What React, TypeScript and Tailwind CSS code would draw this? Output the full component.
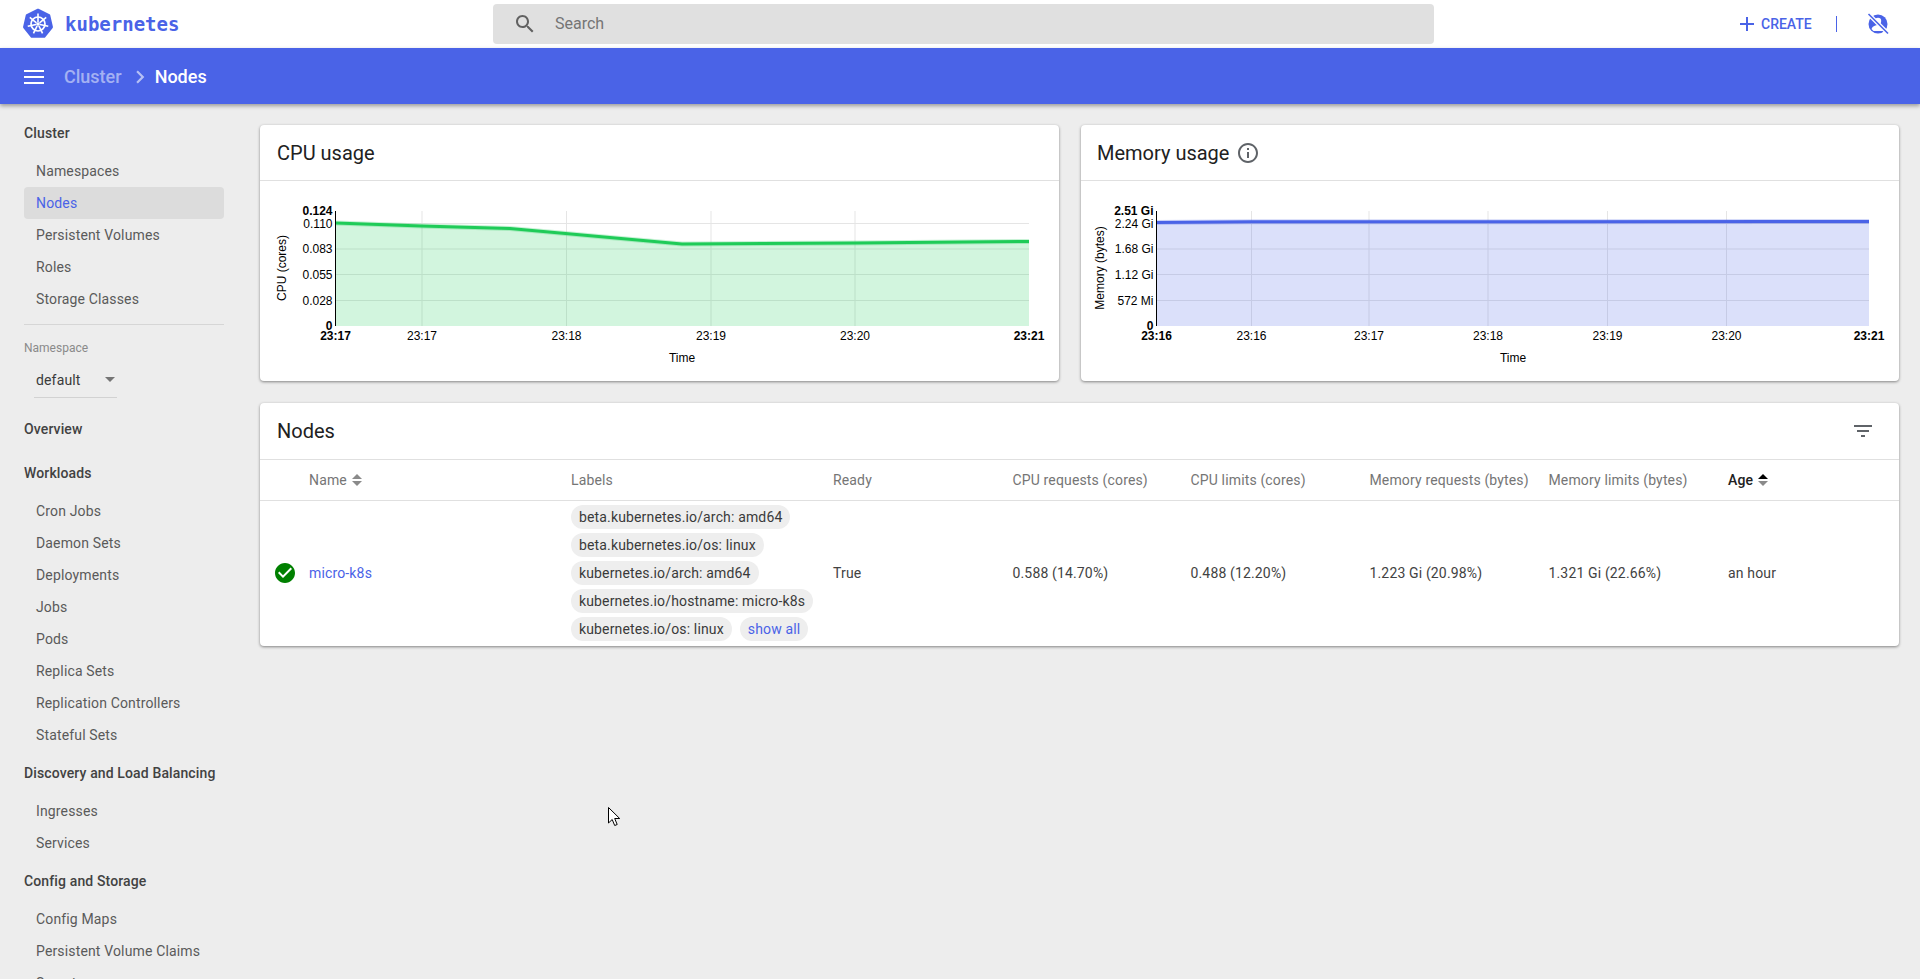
import React from 'react';

const BLUE = '#4a63e7';

interface ChartProps {
  color: string;
  axisX: number;
  right: number;
  yTicks: { label: string; y: number; bold?: boolean }[];
  xTicks: { label: string; x: number; bold?: boolean }[];
  points: [number, number][];
  yTitle: string;
  yTitleX: number;
  timeX: number;
}

const TOP = 30;
const BOTTOM = 145;

const Chart: React.FC<ChartProps> = ({ color, axisX, right, yTicks, xTicks, points, yTitle, yTitleX, timeX }) => {
  const line = points.map((p) => p.join(',')).join(' ');
  const area = `${axisX},${BOTTOM} ${line} ${right},${BOTTOM}`;
  return (
    <svg className="block w-full h-[200px]" style={{ fontFamily: '"Liberation Sans", Arial, sans-serif' }}>
      {xTicks.filter((t) => !t.bold).map((t) => (
        <line key={t.x} x1={t.x} x2={t.x} y1={TOP} y2={BOTTOM} stroke="#e5e5e5" />
      ))}
      {yTicks.filter((t) => !t.bold).map((t) => (
        <line key={t.y} x1={axisX} x2={right} y1={t.y} y2={t.y} stroke="#e5e5e5" />
      ))}
      <polygon points={area} fill={color} fillOpacity={0.2} />
      <polyline points={line} fill="none" stroke={color} strokeOpacity={0.25} strokeWidth={5} />
      <polyline points={line} fill="none" stroke={color} strokeWidth={3} />
      <line x1={axisX} x2={axisX} y1={TOP} y2={BOTTOM} stroke="#000" />
      {yTicks.map((t) => (
        <text key={t.label} x={axisX - 3} y={t.y + 4} textAnchor="end" fontSize={12} fontWeight={t.bold ? 700 : 400} fill="#000">
          {t.label}
        </text>
      ))}
      <text x={axisX - 3} y={BOTTOM + 4} textAnchor="end" fontSize={12} fontWeight={700} fill="#000">0</text>
      {xTicks.map((t) => (
        <text key={t.label + t.x} x={t.x} y={BOTTOM + 14} textAnchor="middle" fontSize={12} fontWeight={t.bold ? 700 : 400} fill="#000">
          {t.label}
        </text>
      ))}
      <text x={timeX} y={181} textAnchor="middle" fontSize={12} fill="#000">Time</text>
      <text transform={`translate(${yTitleX},87) rotate(-90)`} textAnchor="middle" fontSize={12} fill="#000">{yTitle}</text>
    </svg>
  );
};

const MaterialIcon: React.FC<{ d: string; className: string }> = ({ d, className }) => (
  <svg viewBox="0 0 24 24" className={className} fill="currentColor">
    <path d={d} />
  </svg>
);

const SortIcon: React.FC<{ active?: boolean }> = ({ active }) => (
  <svg width="10" height="14" viewBox="0 0 10 14" className="ml-[5px]">
    <path d="M0 6l5-5 5 5z" fill={active ? '#000' : '#8a8a8a'} />
    <path d="M0 8l5 5 5-5z" fill="#8a8a8a" />
  </svg>
);

const KubeLogo: React.FC = () => (
  <svg width="32" height="32" viewBox="0 0 32 32">
    <polygon
      points="16,2 27,7.3 29.7,19.1 22.1,28.6 9.9,28.6 2.3,19.1 5,7.3"
      fill={BLUE}
      stroke={BLUE}
      strokeWidth="2.5"
      strokeLinejoin="round"
    />
    <g stroke="#fff" fill="none">
      <circle cx="16" cy="16" r="7" strokeWidth="1.7" />
      {[0, 51.4, 102.8, 154.3, 205.7, 257.1, 308.6].map((a) => (
        <line key={a} x1="16" y1="14" x2="16" y2="5.5" strokeWidth="1.6" transform={`rotate(${a} 16 16)`} />
      ))}
      <circle cx="16" cy="16" r="1.6" fill="#fff" strokeWidth="0.5" />
    </g>
  </svg>
);

const nav = [
  { title: 'Overview', items: [] as string[] },
  { title: 'Workloads', items: ['Cron Jobs', 'Daemon Sets', 'Deployments', 'Jobs', 'Pods', 'Replica Sets', 'Replication Controllers', 'Stateful Sets'] },
  { title: 'Discovery and Load Balancing', items: ['Ingresses', 'Services'] },
  { title: 'Config and Storage', items: ['Config Maps', 'Persistent Volume Claims', 'Secrets'] },
];

const NavGroup: React.FC<{ title: string; items: string[]; active?: string }> = ({ title, items, active }) => (
  <div className={items.length > 0 ? 'pt-1.5' : 'py-1.5'}>
    <div className="h-8 flex items-center pl-6 text-sm font-medium tracking-[0.13px] text-[#424242]">{title}</div>
    {items.length > 0 && (
      <div className="mt-1.5">
        {items.map((item) => (
          <div
            key={item}
            className={`h-8 ml-6 w-[200px] pl-3 flex items-center rounded-sm text-sm tracking-[0.15px] ${
              item === active ? 'bg-[#dcdcdc] text-[#4a63e7]' : 'text-[#5a5a5a]'
            }`}
          >
            {item}
          </div>
        ))}
      </div>
    )}
  </div>
);

const Chip: React.FC<{ children: React.ReactNode; link?: boolean }> = ({ children, link }) => (
  <span className={`inline-flex h-6 items-center rounded-xl bg-[#eeeeee] px-2 text-sm whitespace-nowrap ${link ? 'text-[#4a63e7]' : 'text-[#3a3a3a]'}`}>
    {children}
  </span>
);

const columns = ['CPU requests (cores)', 'CPU limits (cores)', 'Memory requests (bytes)', 'Memory limits (bytes)'];
const values = ['0.588 (14.70%)', '0.488 (12.20%)', '1.223 Gi (20.98%)', '1.321 Gi (22.66%)'];
const tableGrid = 'grid grid-cols-[49px_262px_262px_179.5px_178px_179px_179px_179.5px_1fr]';

const App: React.FC = () => {
  return (
    <div className="h-[979px] overflow-hidden bg-[#ededed] relative" style={{ fontFamily: 'Roboto, sans-serif' }}>
      <header className="h-12 bg-white flex items-center">
        <div className="w-[493px] flex items-center pl-[22px] shrink-0">
          <KubeLogo />
          <span className="ml-[11px] text-[19px] font-bold text-[#4a63e7]" style={{ fontFamily: '"DejaVu Sans Mono", monospace' }}>
            kubernetes
          </span>
        </div>
        <div className="w-[941px] h-10 bg-[#e0e0e0] rounded-sm flex items-center pl-5 shrink-0 text-[#757575]">
          <MaterialIcon className="w-6 h-6 text-[#616161]" d="M15.5 14h-.79l-.28-.27C15.41 12.59 16 11.11 16 9.5 16 5.91 13.09 3 9.5 3S3 5.91 3 9.5 5.91 16 9.5 16c1.61 0 3.09-.59 4.23-1.57l.27.28v.79l5 4.99L20.49 19l-4.99-5zm-6 0C7.01 14 5 11.99 5 9.5S7.01 5 9.5 5 14 7.01 14 9.5 11.99 14 9.5 14z" />
          <span className="ml-[18px] text-base">Search</span>
        </div>
        <div className="flex items-center pl-[301px] text-[#4a63e7]">
          <MaterialIcon className="w-6 h-6 shrink-0" d="M19 13h-6v6h-2v-6H5v-2h6V5h2v6h6v2z" />
          <span className="ml-0.5 text-sm font-medium">CREATE</span>
          <span className="ml-6 w-px h-4 bg-[#4a63e7]" />
          <svg width="24" height="24" viewBox="0 0 24 24" className="ml-[29px]">
            <circle cx="12" cy="12" r="9.5" fill={BLUE} />
            <circle cx="12" cy="9" r="3.2" fill="#fff" />
            <path d="M5.5 17c1-3 4-4 6.500-4s5.500 1 6.500 4l-2 2H7.500z" fill="#fff" />
            <path d="M3 2.500L21.500 21" stroke="#fff" strokeWidth="4" />
            <path d="M2.500 2L22 21.500" stroke={BLUE} strokeWidth="1.600" />
          </svg>
        </div>
      </header>

      <div className="h-14 bg-[#4a63e7] flex items-center pl-6 pt-0.5 shadow-[0_2px_4px_rgba(0,0,0,0.35)] relative z-10">
        <svg width="20" height="14" viewBox="0 0 20 14">
          <path d="M0 0h20v2H0zM0 6h20v2H0zM0 12h20v2H0z" fill="#fff" />
        </svg>
        <span className="ml-5 text-lg font-medium text-white/50">Cluster</span>
        <MaterialIcon className="ml-[5px] w-[26px] h-[26px] text-white/60" d="M10 6L8.59 7.41 13.17 12l-4.58 4.59L10 18l6-6z" />
        <span className="ml-0.5 text-lg font-medium text-white">Nodes</span>
      </div>

      <div className="flex">
        <aside className="w-[240px] shrink-0 pt-[7px]">
          <NavGroup title="Cluster" items={['Namespaces', 'Nodes', 'Persistent Volumes', 'Roles', 'Storage Classes']} active="Nodes" />
          <div className="ml-6 w-[200px] mt-[9px] border-t border-[#d6d6d6]" />
          <div className="pt-[15px] pb-[9px]">
            <div className="pl-6 h-4 flex items-center text-xs text-[#8a8a8a]">Namespace</div>
            <div className="ml-[34px] w-[83px] h-[42px] border-b border-[#d2d2d2] flex items-center justify-between pl-0.5 pr-0.5 pt-1.5">
              <span className="text-sm text-[#3a3a3a] tracking-[0.15px]">default</span>
              <span className="w-0 h-0 border-x-[5px] border-x-transparent border-t-[5px] border-t-[#757575]" />
            </div>
          </div>
          {nav.map((g) => (
            <NavGroup key={g.title} title={g.title} items={g.items} />
          ))}
        </aside>

        <main className="flex-1 pt-[21px] pl-5 pr-[21px]">
          <div className="grid grid-cols-[799px_1fr] gap-x-[22px]">
            <section className="bg-white rounded-sm shadow-[0_1px_3px_rgba(0,0,0,0.45)]">
              <div className="h-14 pl-[17px] flex items-center border-b border-[#e0e0e0] text-xl text-[#212121]">CPU usage</div>
              <Chart
                color="#1fcb58"
                axisX={75.5}
                right={769}
                yTitle="CPU (cores)"
                yTitleX={26}
                timeX={422}
                yTicks={[
                  { label: '0.124', y: 30, bold: true },
                  { label: '0.110', y: 42.5 },
                  { label: '0.083', y: 68 },
                  { label: '0.055', y: 93.5 },
                  { label: '0.028', y: 119.5 },
                ]}
                xTicks={[
                  { label: '23:17', x: 75.5, bold: true },
                  { label: '23:17', x: 162 },
                  { label: '23:18', x: 306.5 },
                  { label: '23:19', x: 451 },
                  { label: '23:20', x: 595 },
                  { label: '23:21', x: 769, bold: true },
                ]}
                points={[[75.5, 42], [162, 45], [250, 47.5], [422, 63], [595, 62], [769, 60.5]]}
              />
            </section>
            <section className="bg-white rounded-sm shadow-[0_1px_3px_rgba(0,0,0,0.45)]">
              <div className="h-14 pl-4 flex items-center border-b border-[#e0e0e0] text-xl text-[#212121]">
                Memory usage
                <MaterialIcon className="ml-[7px] w-6 h-6 text-[#5f6368]" d="M11 7h2v2h-2zm0 4h2v6h-2zm1-9C6.48 2 2 6.48 2 12s4.480 10 10 10 10-4.480 10-10S17.520 2 12 2zm0 18c-4.410 0-8-3.590-8-8s3.590-8 8-8 8 3.590 8 8-3.590 8-8 8z" />
              </div>
              <Chart
                color={BLUE}
                axisX={75.5}
                right={788}
                yTitle="Memory (bytes)"
                yTitleX={23}
                timeX={432}
                yTicks={[
                  { label: '2.51 Gi', y: 30, bold: true },
                  { label: '2.24 Gi', y: 42.5 },
                  { label: '1.68 Gi', y: 68 },
                  { label: '1.12 Gi', y: 93.5 },
                  { label: '572 Mi', y: 119.5 },
                ]}
                xTicks={[
                  { label: '23:16', x: 75.5, bold: true },
                  { label: '23:16', x: 170.5 },
                  { label: '23:17', x: 288 },
                  { label: '23:18', x: 407 },
                  { label: '23:19', x: 526.5 },
                  { label: '23:20', x: 645.5 },
                  { label: '23:21', x: 788, bold: true },
                ]}
                points={[[75.5, 41.5], [170, 40.8], [788, 40.5]]}
              />
            </section>
          </div>

          <section className="mt-[22px] bg-white rounded-sm shadow-[0_1px_3px_rgba(0,0,0,0.45)]">
            <div className="h-[57px] pl-[17px] pr-6 flex items-center justify-between border-b border-[#e0e0e0]">
              <span className="text-xl text-[#212121]">Nodes</span>
              <MaterialIcon className="w-6 h-6 text-[#5f6368]" d="M10 18h4v-2h-4v2zM3 6v2h18V6H3zm3 7h12v-2H6v2z" />
            </div>
            <div className={`${tableGrid} h-[41px] pb-px items-center border-b border-[#e0e0e0] text-sm tracking-[0.15px] text-[#757575]`}>
              <div />
              <div className="flex items-center">Name<SortIcon /></div>
              <div>Labels</div>
              <div>Ready</div>
              {columns.map((c) => (
                <div key={c} className="whitespace-nowrap">{c}</div>
              ))}
              <div className="flex items-center text-[#212121] font-medium">Age<SortIcon active /></div>
            </div>
            <div className={`${tableGrid} h-[145px] pb-0.5 items-center text-sm tracking-[0.15px] text-[#424242]`}>
              <div className="pl-[13px] flex">
                <MaterialIcon className="w-6 h-6 text-[#008000]" d="M12 2C6.48 2 2 6.48 2 12s4.48 10 10 10 10-4.48 10-10S17.52 2 12 2zm-2 15l-5-5 1.41-1.41L10 14.17l7.59-7.59L19 8l-9 9z" />
              </div>
              <div className="text-[#4a63e7]">micro-k8s</div>
              <div className="flex flex-col items-start gap-1">
                <Chip>beta.kubernetes.io/arch: amd64</Chip>
                <Chip>beta.kubernetes.io/os: linux</Chip>
                <Chip>kubernetes.io/arch: amd64</Chip>
                <Chip>kubernetes.io/hostname: micro-k8s</Chip>
                <div className="flex gap-2">
                  <Chip>kubernetes.io/os: linux</Chip>
                  <Chip link>show all</Chip>
                </div>
              </div>
              <div>True</div>
              {values.map((v) => (
                <div key={v}>{v}</div>
              ))}
              <div>an hour</div>
            </div>
          </section>
        </main>
      </div>

      <svg width="14" height="22" viewBox="0 0 14 22" className="absolute left-[607px] top-[806px] z-20">
        <path d="M1.500 1.500v15.500l3.700-3.500 2.500 6 2.500-1-2.500-6h5z" fill="#fff" stroke="#000" />
      </svg>
    </div>
  );
};

export default App;
